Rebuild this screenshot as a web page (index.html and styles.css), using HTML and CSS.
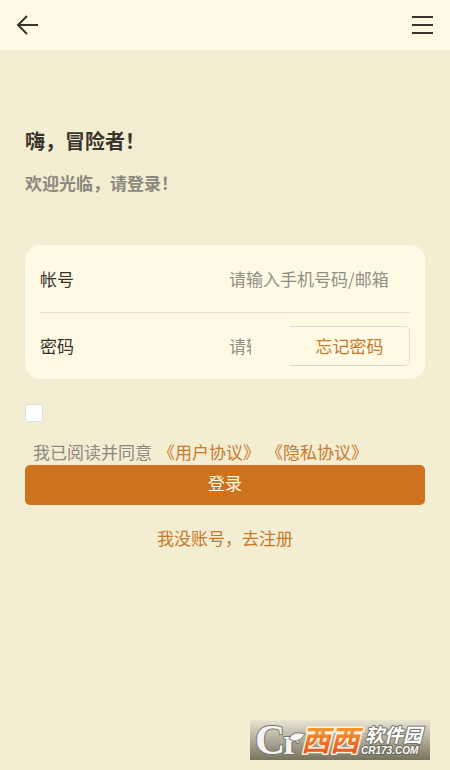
FILE: index.html
```html
<!DOCTYPE html>
<html lang="zh-CN">
<head>
<meta charset="utf-8">
<meta name="viewport" content="width=device-width, initial-scale=1">
<title>登录</title>
<link rel="stylesheet" href="styles.css">
</head>
<body>
<header class="topbar">
  <button class="icon-button" type="button" aria-label="返回">
    <svg width="24" height="24" viewBox="0 0 24 24"><path d="M23 12H3M12 3L3 12L12 21"/></svg>
  </button>
  <button class="icon-button" type="button" aria-label="菜单">
    <svg width="24" height="24" viewBox="0 0 24 24"><path d="M1 4H22M1 12H22M1 20H22"/></svg>
  </button>
</header>
<main class="content">
  <h1 class="title">嗨，冒险者！</h1>
  <p class="subtitle">欢迎光临，请登录！</p>
  <form class="form">
    <div class="card">
      <div class="row">
        <label class="label" for="account">帐号</label>
        <input class="input" id="account" type="text" placeholder="请输入手机号码/邮箱">
      </div>
      <div class="row">
        <label class="label" for="password">密码</label>
        <div class="password">
          <input class="input input-short" id="password" type="password" placeholder="请输入密码">
          <button class="forgot" type="button">忘记密码</button>
        </div>
      </div>
    </div>
    <input class="check" id="agree" type="checkbox">
    <div class="agreement">
      <label for="agree">我已阅读并同意</label>
      <a href="#user">《用户协议》</a>
      <a href="#privacy">《隐私协议》</a>
    </div>
    <button class="submit" type="submit">登录</button>
  </form>
  <a class="register" href="#register">我没账号，去注册</a>
</main>
<footer class="footer">
  <svg class="brand" width="180" height="40" viewBox="0 0 180 40" role="img" aria-label="西西软件园">
    <defs>
      <linearGradient id="plate" x1="0" y1="0" x2="0" y2="1">
        <stop offset="0" stop-color="#e9e5d2"/><stop offset="1" stop-color="#77735f"/>
      </linearGradient>
      <linearGradient id="orange" x1="0" y1="0" x2="0" y2="1">
        <stop offset="0" stop-color="#f9b233"/><stop offset="1" stop-color="#e8461a"/>
      </linearGradient>
    </defs>
    <rect width="180" height="40" fill="url(#plate)"/>
    <text class="brand-cr" x="5" y="34" font-size="42">C</text>
    <text class="brand-cr" x="33" y="34" font-size="36">r</text>
    <path class="leaf" d="M39 19Q41 14 45 13Q50 12 55 14Q50 22 43 21Z"/>
    <text class="brand-xixi" x="51" y="31" font-size="29">西西</text>
    <text class="brand-name" x="115" y="22" font-size="19">软件园</text>
    <text class="brand-url" x="111" y="34" font-size="10">CR173.COM</text>
  </svg>
</footer>
</body>
</html>
```
FILE: styles.css
```css
* {
  box-sizing: border-box;
}

body {
  margin: 0;
  min-height: 100vh;
  display: flex;
  flex-direction: column;
  background: #f3edd1;
  color: #38342c;
  font: 17px/26px "Noto Sans CJK SC", sans-serif;
}

button,
input {
  font: inherit;
  color: inherit;
}

a {
  color: #c6792f;
  text-decoration: none;
}

.topbar {
  height: 50px;
  padding: 0 15px;
  display: flex;
  align-items: center;
  justify-content: space-between;
  background: #fffae4;
}

.icon-button {
  display: flex;
  padding: 0;
  border: 0;
  background: none;
}

.icon-button svg {
  fill: none;
  stroke: #38342c;
  stroke-width: 2;
}

.content {
  padding: 76px 25px 0;
  display: flex;
  flex-direction: column;
}

.title {
  margin: 0;
  font-size: 20px;
  line-height: 30px;
}

.subtitle {
  margin: 14px 0 49px;
  color: #8b897e;
  font-weight: 700;
}

.form {
  display: flex;
  flex-direction: column;
}

.card {
  padding: 0 15px;
  border-radius: 15px;
  background: #fffae4;
}

.row {
  min-height: 66px;
  display: grid;
  grid-template-columns: 1fr 181px;
  align-items: center;
}

.row:first-child {
  min-height: 68px;
  border-bottom: 1px solid #e5dfc8;
}

.input {
  width: 100%;
  min-width: 0;
  padding: 0;
  border: 0;
  outline: 0;
  background: none;
}

.input::placeholder {
  color: #918f84;
  opacity: 1;
}

.password {
  display: flex;
  align-items: center;
  justify-content: space-between;
}

.input-short {
  width: 22px;
}

.forgot {
  width: 120px;
  height: 40px;
  padding: 0;
  border: 1px solid #d8d9d8;
  border-left: 0;
  border-radius: 0 5px 5px 0;
  background: none;
  color: #c6792f;
}

.check {
  appearance: none;
  width: 18px;
  height: 18px;
  margin: 25px 0 17px;
  border: 1px solid #dcdfe6;
  border-radius: 3px;
  background: #fff;
}

.check:checked {
  background: #ce731d;
}

.agreement {
  padding-left: 8px;
  display: flex;
  gap: 6px;
  color: #8b897e;
}

.submit {
  height: 40px;
  padding: 0 0 4px;
  border: 0;
  border-radius: 5px;
  background: #ce731d;
  color: #fffae4;
}

.register {
  margin-top: 20px;
  align-self: center;
}

.footer {
  margin-top: auto;
  padding: 20px 20px 10px;
  display: flex;
  justify-content: flex-end;
}

.brand {
  display: block;
}

.brand text {
  paint-order: stroke;
  stroke-linejoin: round;
}

.brand-cr {
  font-family: "Liberation Serif", serif;
  font-weight: 700;
  fill: #f4f4f2;
  stroke: #77756b;
  stroke-width: 2;
}

.leaf {
  fill: #f4f4f2;
  stroke: #77756b;
  stroke-width: 1;
}

.brand-xixi {
  font-family: "Noto Sans CJK SC", sans-serif;
  font-weight: 700;
  font-style: italic;
  fill: url(#orange);
  stroke: #fff3df;
  stroke-width: 3;
}

.brand-name {
  font-family: "Noto Sans CJK SC", sans-serif;
  font-weight: 700;
  font-style: italic;
  fill: #fff;
  stroke: #77756b;
  stroke-width: 2;
}

.brand-url {
  font-family: "Liberation Sans", sans-serif;
  font-weight: 700;
  font-style: italic;
  fill: #fff;
  stroke: #69675d;
  stroke-width: 2;
}
```
